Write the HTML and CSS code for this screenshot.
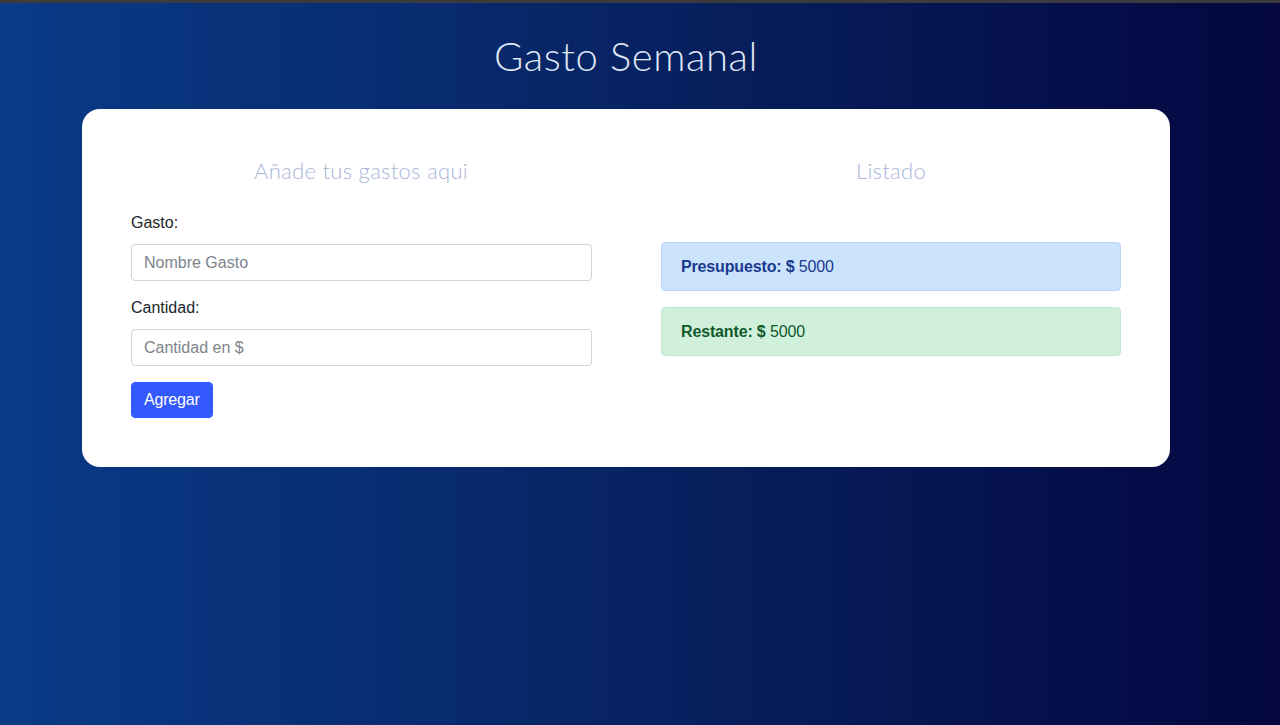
FILE: index.html
```html
<!DOCTYPE html>
<html lang="es">
<head>
<meta charset="utf-8">
<title>Gasto Semanal</title>
<link rel="stylesheet" href="styles.css">
</head>
<body>
<div class="page">
  <header class="header">
    <h1 class="title">Gasto Semanal</h1>
  </header>
  <main class="card">
    <section class="col">
      <h2 class="subtitle">Añade tus gastos aqui</h2>
      <form class="form">
        <div class="group">
          <label class="label" for="gasto">Gasto:</label>
          <input class="input" id="gasto" type="text" placeholder="Nombre Gasto">
        </div>
        <div class="group">
          <label class="label" for="cantidad">Cantidad:</label>
          <input class="input" id="cantidad" type="text" placeholder="Cantidad en $">
        </div>
        <button class="btn" type="button">Agregar</button>
      </form>
    </section>
    <section class="col">
      <h2 class="subtitle">Listado</h2>
      <div class="list">
        <div class="alert alert-primary"><strong>Presupuesto: $</strong> 5000</div>
        <div class="alert alert-success"><strong>Restante: $</strong> 5000</div>
      </div>
    </section>
  </main>
</div>
</body>
</html>
```
FILE: styles.css
```css
* { box-sizing: border-box; }
html, body { margin: 0; padding: 0; }
body {
  min-height: 725px;
  background: linear-gradient(to right, #093b87 0%, #082a6e 35%, #061a55 65%, #030640 100%);
  border-top: 3px solid #3b3b3d;
  font-family: "Liberation Sans", Arial, sans-serif;
  font-size: 16px;
  color: #212529;
}
.page {
  width: 1252px;
}
.header {
  display: flex;
  justify-content: center;
  padding-top: 31px;
  height: 106px;
}
.title {
  margin: 0;
  font-family: Lato, "Open Sans", sans-serif;
  font-weight: 300;
  font-size: 40px;
  line-height: 44px;
  color: #dfe6f4;
  letter-spacing: 0.6px;
}
.card {
  width: 1088px;
  margin: 0 auto;
  background: #fff;
  border-radius: 18px;
  padding: 49px;
  display: grid;
  grid-template-columns: 460px 460px;
  column-gap: 70px;
}
.subtitle {
  margin: 0;
  text-align: center;
  font-family: Lato, "Open Sans", sans-serif;
  font-weight: 300;
  font-size: 22px;
  line-height: 26px;
  color: #aab6d9;
  letter-spacing: 0.3px;
}
.form {
  margin-top: 27px;
}
.group {
  margin-bottom: 15px;
}
.group:nth-child(2) { margin-bottom: 16px; }
.label {
  display: block;
  line-height: 24px;
  margin-bottom: 9px;
  color: #212529;
}
.input {
  display: block;
  width: 461px;
  height: 37px;
  padding: 6px 12px;
  font-family: inherit;
  font-size: 16px;
  color: #495057;
  border: 1px solid #ced4da;
  border-radius: 4px;
  background: #fff;
}
.input::placeholder { color: #7d848b; opacity: 1; }
.btn {
  display: block;
  height: 36px;
  padding: 0 12px;
  font-family: inherit;
  font-size: 16px;
  letter-spacing: -0.2px;
  color: #fff;
  background: #3358fe;
  border: 1px solid #3358fe;
  border-radius: 4px;
}
.list {
  margin-top: 58px;
  display: flex;
  flex-direction: column;
  gap: 16px;
}
.alert {
  padding: 12px 19px;
  line-height: 23px;
  border: 1px solid transparent;
  border-radius: 4px;
  letter-spacing: -0.15px;
}
.alert-primary {
  background: #cce3fd;
  border-color: #b9d7fb;
  color: #1a3a8f;
}
.alert-success {
  background: #d1f0dc;
  border-color: #bfe7cb;
  color: #0f5a2a;
}
```
